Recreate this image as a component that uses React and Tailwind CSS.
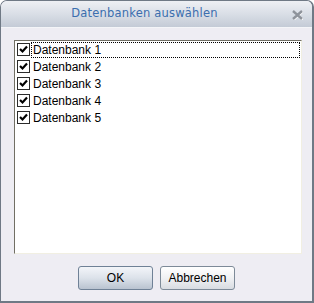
import React, { useState } from 'react'

const items = ['Datenbank 1', 'Datenbank 2', 'Datenbank 3', 'Datenbank 4', 'Datenbank 5']

function CheckBox({ checked }) {
  return (
    <span className="w-[13px] h-[13px] shrink-0 border border-[#2b2b2b] bg-white flex items-center justify-center">
      {checked && (
        <svg width="9" height="9" viewBox="0 0 9 9">
          <path d="M1 4 L3.5 6.5 L8 1.5" stroke="#000" strokeWidth="2.2" fill="none" />
        </svg>
      )}
    </span>
  )
}

export default function App() {
  const [checked, setChecked] = useState(items.map(() => true))

  const toggle = (i) => {
    setChecked(checked.map((c, j) => (j === i ? !c : c)))
  }

  return (
    <div className="w-[314px] h-[303px] flex flex-col bg-[#eeedf3] border-l border-r-2 border-b-2 border-t border-[#6f7985] rounded-t-[7px] overflow-hidden font-['Liberation_Sans',Arial,sans-serif]">
      {/* Title bar */}
      <div className="h-[27px] shrink-0 relative flex items-center justify-center pr-[24px] bg-gradient-to-b from-[#eef0f4] via-[#d9dee6] to-[#c4cbd6] border-b border-[#f4f5f8]">
        <span className="text-[11.5px] text-[#3b6eae] tracking-[0.2px] font-['DejaVu_Sans',Verdana,sans-serif]">
          Datenbanken auswählen
        </span>
        <svg className="absolute right-[9px] top-[9px]" width="11" height="10" viewBox="0 0 11 10">
          <path d="M1 1 L10 9 M10 1 L1 9" stroke="#fff" strokeWidth="2.4" transform="translate(0.6 0.6)" />
          <path d="M1 1 L10 9 M10 1 L1 9" stroke="#8e939b" strokeWidth="2.4" />
        </svg>
      </div>

      {/* Body */}
      <div className="flex-1 flex flex-col pl-[13px] pt-[12px]">
        <div className="w-[288px] h-[214px] bg-white border-l border-t border-[#716f64] border-r border-b border-r-[#f1efe2] border-b-[#f1efe2] pl-[1px]">
          {items.map((name, i) => (
            <div
              key={name}
              onClick={() => toggle(i)}
              className="h-[17px] flex items-center gap-[1px] pl-[1px] cursor-default"
            >
              <CheckBox checked={checked[i]} />
              <span
                className={`flex-1 h-[16px] mr-[1px] flex items-center pl-[1px] text-[12px] text-black leading-none ${
                  i === 0 ? 'border border-dotted border-black' : 'border border-transparent'
                }`}
              >
                {name}
              </span>
            </div>
          ))}
        </div>

        {/* Buttons */}
        <div className="flex justify-center gap-[7px] mt-[12px] pr-[13px]">
          <button className="w-[75px] h-[24px] rounded-[3px] border border-[#6f8196] bg-gradient-to-b from-[#f3f5f9] via-[#dce2ea] to-[#b9c3d0] text-[12px] text-black">
            OK
          </button>
          <button className="w-[75px] h-[24px] rounded-[3px] border border-[#7d8a98] bg-gradient-to-b from-[#ffffff] via-[#f0f1f3] to-[#d8dce2] text-[12px] text-black">
            Abbrechen
          </button>
        </div>
      </div>
    </div>
  )
}
